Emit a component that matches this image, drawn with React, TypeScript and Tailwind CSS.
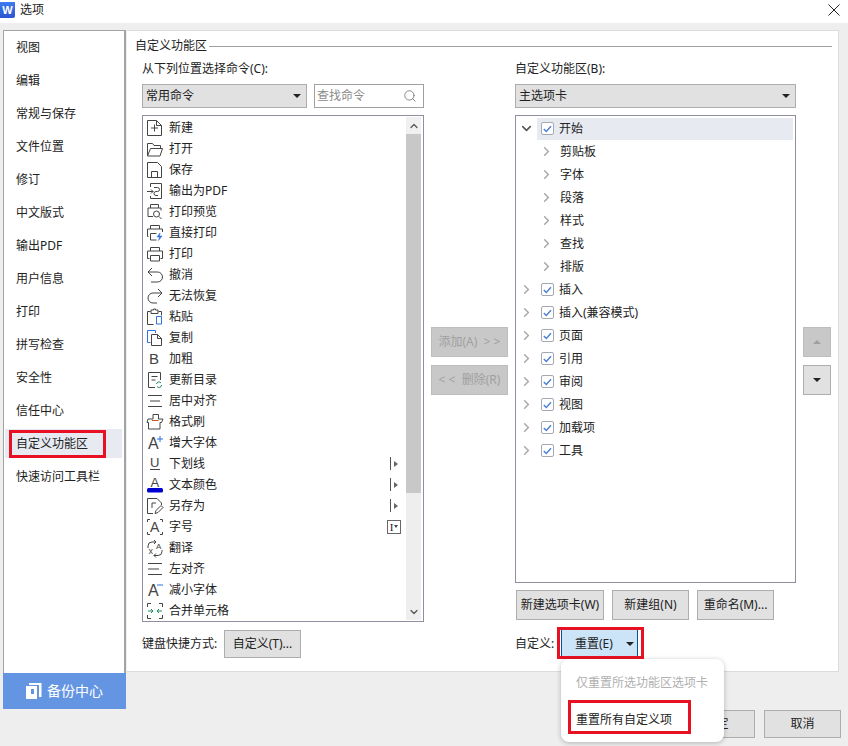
import React from 'react';
import { ChevronUp, ChevronDown, ChevronRight, Search } from 'lucide-react';

const navItems = ['视图', '编辑', '常规与保存', '文件位置', '修订', '中文版式', '输出PDF', '用户信息', '打印', '拼写检查', '安全性', '信任中心', '自定义功能区', '快速访问工具栏'];

const printerBody = 'M5.500 7V3.500h9V7M4.500 14.500h-2V7h15v7.500h-2M5.500 11.500h9v5.500h-9z';

const Letter = ({ c, x = 3, y = 15, size = 14 }: { c: string; x?: number; y?: number; size?: number }) => (
  <text x={x} y={y} fontSize={size} fontFamily="'Liberation Sans', sans-serif" fill="#444" stroke="none">{c}</text>
);

// one drawing per command, 20x20 box
const commandIcons: Record<string, React.ReactNode> = {
  新建: <path d="M2.500 2.500h9l5 5v10h-14zM11.500 2.500v5h5M9.500 6.500v7M6 10h7" />,
  打开: <path d="M2.500 17V4.500h5l1.500 2h6.500v2.500M2.500 17l3-7.500h12l-2.500 7.500z" />,
  保存: <path d="M2.500 2.500h10l4 4v11h-14zM6.500 17.500v-6h6v6" />,
  输出为PDF: <path d="M5.500 6V2.500h11v15h-11V15M2 10.500h6M6 8.500l2 2-2 2M9 6.500h3.500a2 2 0 0 1 0 4h-1.500a2 2 0 0 0 0 4h2" />,
  打印预览: <path d="M5.500 6V2.500h8V6M8 14.500H3V6h13v2.500M11.500 9a3 3 0 1 1 0 6 3 3 0 0 1 0-6zM14 14.500l2.500 2.500" />,
  直接打印: (
    <>
      <path d="M5.500 6V2.500h9V6M3.500 13.500h-1V6h15v3M5.500 10.500h6M5.500 10.500v6.500h6" />
      <path d="M15 10l-3 4h2.500l-1 3.500 3.500-4.500h-2.500z" stroke="#2f6fe0" fill="#2f6fe0" strokeWidth={0.5} />
    </>
  ),
  打印: <path d={printerBody} />,
  撤消: <path d="M7 3L3 7l4 4M3 7h9.500a5 5 0 0 1 0 10H6" />,
  无法恢复: <path d="M13 3l4 4-4 4M17 7H8a5 5 0 0 0 0 10h4" />,
  粘贴: (
    <>
      <path d="M5.500 4.500h-3v13h6M13.500 4.500h3v4M6 3v3.500h7V3H10.500V2h-2v1z" />
      <path d="M11.500 9.500h5v7.500h-5z" stroke="#2f6fe0" />
    </>
  ),
  复制: (
    <>
      <path d="M2.500 12V2.500h8V5M2.500 12v2.500h3" stroke="#2f6fe0" />
      <path d="M6.500 6.500h6l4 4v7h-10zM12.500 6.500v4h4" />
    </>
  ),
  加粗: <Letter c="B" x={4} y={15} size={15} />,
  更新目录: (
    <>
      <path d="M10 17.500H3.500v-15h12V10M6.500 6.500h6M6.500 10h4" />
      <path d="M11.500 14a2.500 2.500 0 0 1 4.500-1M16.500 15a2.500 2.500 0 0 1-4.500 1.500" stroke="#1a8a5a" />
    </>
  ),
  居中对齐: <path d="M3 4.500h14M5 10h10M3 15.500h14" />,
  格式刷: (
    <>
      <path d="M8 2.500h5.500V7H18l-1.500 3.500H15V17H3.500v-6.500H2L3 7h5z" />
      <path d="M7 8.500h6.500" stroke="#c8571a" />
    </>
  ),
  增大字体: (
    <>
      <Letter c="A" x={3} y={16} size={16} />
      <path d="M15 3v6M12 6h6" stroke="#2f6fe0" />
    </>
  ),
  下划线: (
    <>
      <Letter c="U" x={5} y={13} size={13} />
      <path d="M5 15.500h10" />
    </>
  ),
  文本颜色: (
    <>
      <Letter c="A" x={5.5} y={12} size={13} />
      <rect x="2" y="13" width="16" height="4.500" rx="1.500" fill="#0000d0" stroke="none" />
    </>
  ),
  另存为: (
    <>
      <path d="M8 17.500H2.500v-15h9.500l4.500 4.500v2M7 7h4M7 7v5" />
      <path d="M10 17.500l1-3 5-5 2 2-5 5z" />
    </>
  ),
  字号: (
    <>
      <path d="M5 2.500H2.500V5M15 2.500h2.500V5M2.500 15v2.500H5M17.500 15v2.500H15" />
      <Letter c="A" x={5} y={15} size={14} />
    </>
  ),
  翻译: (
    <>
      <path d="M3 10V8a4 4 0 0 1 4-4h4M9 2l2 2-2 2M17 12v1.500a4 4 0 0 1-4 4H9M11 15.500l-2 2 2 2" />
      <Letter c="A" x={11} y={11} size={8} />
      <Letter c="x" x={3.500} y={16} size={9} />
    </>
  ),
  左对齐: <path d="M3 4.500h14M3 10h11M3 15.500h14" />,
  减小字体: (
    <>
      <Letter c="A" x={3} y={16} size={16} />
      <path d="M12 5h6" stroke="#2f6fe0" />
    </>
  ),
  合并单元格: (
    <>
      <path d="M6 2.500H2.500V6M14 2.500h3.500V6M2.500 14v3.500H6M17.500 14v3.500H14" />
      <path d="M3 10h5M6 8l2 2-2 2M17 10h-5M14 8l-2 2 2 2" stroke="#1a8a5a" />
    </>
  ),
};

const commands = Object.keys(commandIcons);

const TriangleDown = ({ className = 'border-t-[#222]' }: { className?: string }) => (
  <span className={`inline-block w-0 h-0 border-x-[4px] border-x-transparent border-t-[4px] ${className}`} />
);

const Split = () => (
  <span className="flex items-center gap-[3px] mr-[8px]">
    <span className="w-px h-[13px] bg-[#555]" />
    <span className="w-0 h-0 border-y-[3px] border-y-transparent border-l-[4px] border-l-[#666]" />
  </span>
);

const Checkbox = () => (
  <span className="w-[13px] h-[13px] shrink-0 flex items-center justify-center bg-white border border-[#a3a9b3] rounded-[2px]">
    <svg width="9" height="8" viewBox="0 0 9 8" fill="none" stroke="#4a7fd6" strokeWidth="1.400">
      <path d="M.8 4l2.500 2.500L8 1.200" />
    </svg>
  </span>
);

const TreeRow = ({ label, open }: { label: string; open?: boolean }) => (
  <div className="h-[23px] flex items-center">
    <span className="w-[21px] flex justify-center shrink-0">
      {open
        ? <ChevronDown className="w-[15px] h-[15px] text-[#555]" strokeWidth={2.500} />
        : <ChevronRight className="w-[15px] h-[15px] text-[#aaa]" strokeWidth={2.500} />}
    </span>
    <div className={`flex-1 h-[22px] flex items-center gap-[5px] pl-[4px] ${open ? 'bg-[#e7eaf0]' : ''}`}>
      <Checkbox />
      <span>{label}</span>
    </div>
  </div>
);

const SubRow = ({ label }: { label: string }) => (
  <div className="h-[23px] flex items-center pl-[23px]">
    <ChevronRight className="w-[15px] h-[15px] text-[#aaa] shrink-0" strokeWidth={2.500} />
    <span className="ml-[6px]">{label}</span>
  </div>
);

const Btn = ({ className = '', children }: { className?: string; children: React.ReactNode }) => (
  <div className={`flex items-center justify-center bg-[#e1e1e1] border border-[#adadad] ${className}`}>{children}</div>
);

const Select = ({ label, className = '' }: { label: string; className?: string }) => (
  <div className={`h-[24px] flex items-center justify-between pl-[3px] pr-[5px] bg-[#e1e1e1] border border-[#adadad] ${className}`}>
    <span>{label}</span>
    <TriangleDown />
  </div>
);

export default function App() {
  return (
    <div className="w-[848px] h-[746px] overflow-hidden bg-[#eeeeee] text-[#222] text-[12px] leading-[16px] font-['Noto_Sans','Noto_Sans_CJK_SC',sans-serif]">
      {/* title bar */}
      <div className="h-[23px] bg-white flex items-center">
        <div className="w-[15px] h-[16px] mb-[3px] rounded-br-[2px] flex items-center justify-center bg-gradient-to-b from-[#3f7bf0] to-[#2a55d0] text-white text-[11px] font-bold font-['Liberation_Sans',sans-serif]">W</div>
        <span className="ml-[5px] mb-[3px]">选项</span>
        <svg width="12" height="12" viewBox="0 0 12 12" fill="none" stroke="#222" strokeWidth="1" className="ml-auto mr-[8px] mb-[3px]">
          <path d="M.5.500l11 11M11.500.500l-11 11" />
        </svg>
      </div>

      <div className="flex mt-[7px] pl-[3px]">
        {/* left nav */}
        <div className="w-[123px] shrink-0">
          <div className="h-[643px] bg-white border-l border-t border-r-2 border-[#a3a3a3] pt-[2px] pl-[1px] pr-[2px] flex flex-col gap-[4px]">
            {navItems.map((item) => (
              <div key={item} className={`relative h-[29px] shrink-0 flex items-center pl-[11px] ${item === '自定义功能区' ? 'bg-[#e7eaf0]' : ''}`}>
                <span>{item}</span>
                {item === '自定义功能区' && (
                  <span className="absolute left-[4px] top-[1px] w-[97px] h-[28px] border-[3px] border-[#e81123]" />
                )}
              </div>
            ))}
          </div>
          <div className="h-[36px] bg-[#6495e3] flex items-center pl-[23px] text-white text-[14px]">
            <svg width="16" height="16" viewBox="0 0 16 16" fill="#fff">
              <path d="M0 3h11v13H0zM5 6v5h3V6z" fillRule="evenodd" />
              <path d="M3 0h12.500v14H13V2H3z" />
            </svg>
            <span className="ml-[5px]">备份中心</span>
          </div>
        </div>

        {/* right side */}
        <div className="w-[712px] ml-[1px] shrink-0">
          <div className="h-[642px] bg-white border-t border-r border-b border-[#dcdcdc] pt-[7px] pl-[8px] pr-[6px]">
            <div className="h-[16px] flex items-center gap-[2px]">
              <span>自定义功能区</span>
              <span className="flex-1 h-px bg-[#a0a0a0]" />
            </div>

            <div className="flex mt-[7px] pl-[7px]">
              {/* command list */}
              <div className="w-[282px] shrink-0">
                <div className="h-[16px]">从下列位置选择命令(C):</div>
                <div className="flex gap-[7px] mt-[7px]">
                  <Select label="常用命令" className="w-[165px]" />
                  <div className="flex-1 h-[24px] flex items-center justify-between pl-[2px] pr-[6px] border border-[#a0a0a0] text-[#8a8a8a]">
                    <span>查找命令</span>
                    <Search className="w-[14px] h-[14px] text-[#777]" strokeWidth={1.500} />
                  </div>
                </div>
                <div className="h-[507px] mt-[7px] border border-[#8f8f9d] flex">
                  <div className="flex-1 pt-[1px] min-w-0">
                    {commands.map((name) => (
                      <div key={name} className="h-[21px] flex items-center pl-[2px]">
                        <svg width="20" height="20" viewBox="0 0 20 20" fill="none" stroke="#444" strokeWidth="1" className="shrink-0">
                          {commandIcons[name]}
                        </svg>
                        <span className="ml-[4px]">{name}</span>
                        {(name === '下划线' || name === '文本颜色' || name === '另存为') && (
                          <span className="ml-auto"><Split /></span>
                        )}
                        {name === '字号' && (
                          <span className="ml-auto mr-[5px] w-[14px] h-[14px] border border-[#666] flex items-center justify-center gap-[1px]">
                            <span className="text-[11px] leading-[12px] font-['Liberation_Serif',serif]">I</span>
                            <span className="w-0 h-0 border-x-[2px] border-x-transparent border-t-[3px] border-t-[#444]" />
                          </span>
                        )}
                      </div>
                    ))}
                  </div>
                  <div className="w-[15px] my-[1px] mr-[2px] bg-[#eeeeee] flex flex-col">
                    <div className="h-[17px] bg-[#f0f0f0] flex items-center justify-center">
                      <ChevronUp className="w-[12px] h-[12px] text-[#555]" strokeWidth={2.500} />
                    </div>
                    <div className="h-[359px] bg-[#c8c8c8]" />
                    <div className="mt-auto h-[17px] flex items-center justify-center">
                      <ChevronDown className="w-[12px] h-[12px] text-[#555]" strokeWidth={2.500} />
                    </div>
                  </div>
                </div>
                <div className="flex items-center mt-[8px]">
                  <span className="w-[82px]">键盘快捷方式:</span>
                  <Btn className="w-[77px] h-[28px]">自定义(T)...</Btn>
                </div>
              </div>

              {/* add / remove */}
              <div className="w-[77px] ml-[7px] pt-[266px] shrink-0 flex flex-col gap-[8px]">
                <div className="h-[30px] flex items-center justify-center bg-[#c8c8c8] border border-[#bdbdbd] text-[#a0a0a0] whitespace-pre">添加(A)  &gt; &gt;</div>
                <div className="h-[30px] flex items-center justify-center bg-[#c8c8c8] border border-[#bdbdbd] text-[#a0a0a0] whitespace-pre">&lt; &lt;  删除(R)</div>
              </div>

              {/* ribbon tree */}
              <div className="w-[281px] ml-[7px] shrink-0">
                <div className="h-[16px]">自定义功能区(B):</div>
                <Select label="主选项卡" className="mt-[7px]" />
                <div className="h-[468px] mt-[7px] border border-[#8f8f9d] pt-[1px] pr-[2px]">
                  <TreeRow label="开始" open />
                  {['剪贴板', '字体', '段落', '样式', '查找', '排版'].map((s) => <SubRow key={s} label={s} />)}
                  {['插入', '插入(兼容模式)', '页面', '引用', '审阅', '视图', '加载项', '工具'].map((s) => <TreeRow key={s} label={s} />)}
                </div>
                <div className="flex mt-[7px] pl-[1px] gap-[8px]">
                  <Btn className="w-[88px] h-[30px]">新建选项卡(W)</Btn>
                  <Btn className="w-[77px] h-[30px]">新建组(N)</Btn>
                  <Btn className="w-[77px] h-[30px]">重命名(M)...</Btn>
                </div>
                <div className="flex items-center mt-[10px]">
                  <span className="w-[46px]">自定义:</span>
                  <div className="relative">
                    <div className="w-[77px] h-[27px] flex items-center pl-[13px] bg-[#cce4f7] border-x border-[#005499]">
                      <span>重置(E)</span>
                      <span className="ml-[13px] flex"><TriangleDown /></span>
                    </div>
                    <span className="absolute -left-[4px] -top-[3px] w-[87px] h-[32px] border-[3px] border-[#e81123]" />
                    {/* reset menu */}
                    <div className="absolute left-0 top-[29px] w-[163px] h-[83px] bg-white rounded-[8px] shadow-[0_1px_5px_rgba(0,0,0,0.25)] z-10 pl-[15px] pt-[16px]">
                      <div className="text-[#b0b0b0]">仅重置所选功能区选项卡</div>
                      <div className="mt-[21px]">重置所有自定义项</div>
                      <span className="absolute left-[7px] top-[41px] w-[123px] h-[34px] border-[3px] border-[#e81123]" />
                    </div>
                  </div>
                </div>
              </div>

              {/* move up / down */}
              <div className="w-[28px] ml-[7px] pt-[266px] shrink-0 flex flex-col gap-[8px]">
                <div className="h-[30px] flex items-center justify-center bg-[#c8c8c8] border border-[#bdbdbd]">
                  <span className="w-0 h-0 border-x-[4px] border-x-transparent border-b-[4px] border-b-[#a0a0a0]" />
                </div>
                <Btn className="h-[30px]"><TriangleDown /></Btn>
              </div>
            </div>
          </div>

          {/* footer */}
          <div className="flex justify-end gap-[9px] mt-[38px] -mr-[2px]">
            <Btn className="w-[77px] h-[28px]">确定</Btn>
            <Btn className="w-[77px] h-[28px]">取消</Btn>
          </div>
        </div>
      </div>
    </div>
  );
}
